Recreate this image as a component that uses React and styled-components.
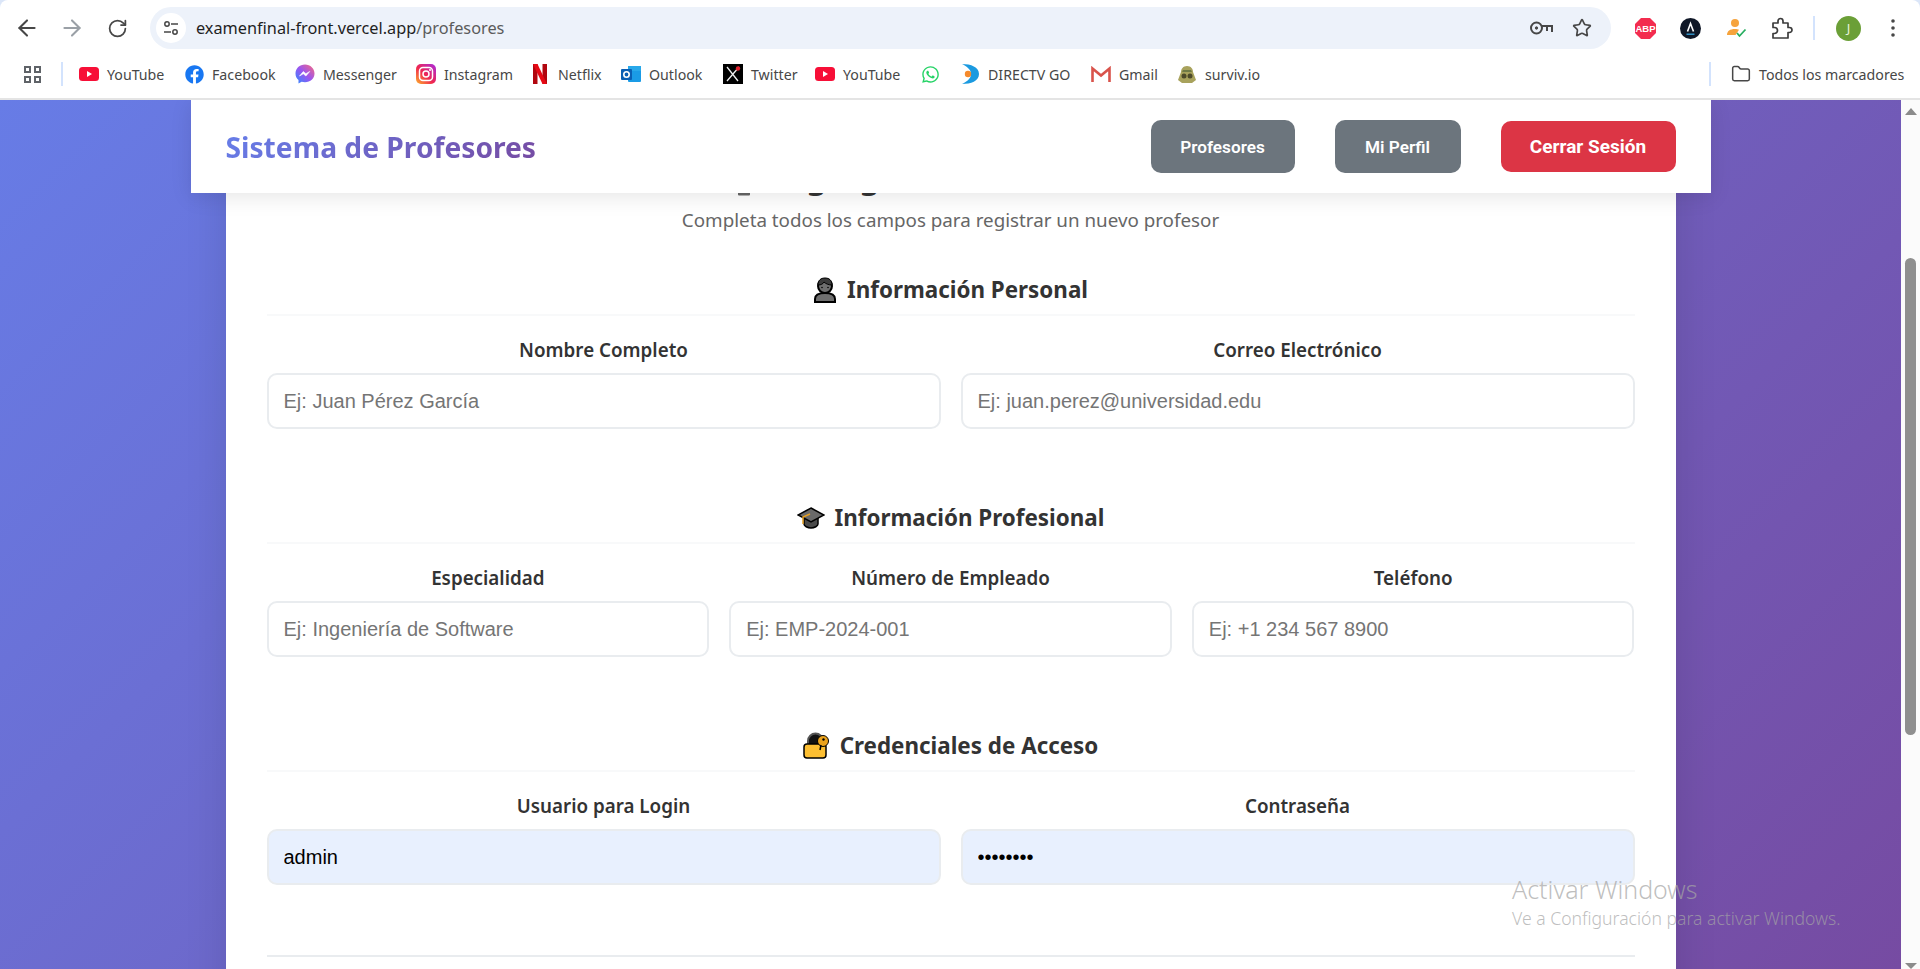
import React from "react";
import styled, { createGlobalStyle } from "styled-components";
import { ArrowLeft, ArrowRight, RotateCw, Star, Folder } from "lucide-react";
import { FaFacebook, FaWhatsapp } from "react-icons/fa";

const UI_FONT = `"Noto Sans", "Open Sans", "Liberation Sans", sans-serif`;
const FIELD_FONT = `"Liberation Sans", Arial, sans-serif`;

const GlobalStyle = createGlobalStyle`
  html, body {
    margin: 0;
    padding: 0;
    height: 100%;
    overflow: hidden;
    font-family: ${UI_FONT};
  }
  * { box-sizing: border-box; }
`;

const Page = styled.div`
  display: flex;
  flex-direction: column;
  height: 969px;
  overflow: hidden;
  background: #fff;
`;

/* ---- browser chrome ---- */

const BrowserChrome = styled.header`
  flex: 0 0 100px;
  display: flex;
  flex-direction: column;
  background: #dbe6f8;
`;

const Toolbar = styled.div`
  flex: 0 0 56px;
  display: flex;
  align-items: center;
  gap: 29px;
  padding: 0 0 0 19px;
  background: #fff;
  border-radius: 8px 8px 0 0;
`;

const NavIcon = styled.span`
  display: flex;
  width: 16px;
  height: 16px;
  align-items: center;
  justify-content: center;
  color: ${(p) => (p.$muted ? "#9aa0a6" : "#474747")};

  svg {
    flex-shrink: 0;
  }
`;

const AddressBar = styled.div`
  display: flex;
  align-items: center;
  width: 1461px;
  height: 42px;
  margin-left: -4px;
  padding: 0 19px 0 6px;
  border-radius: 21px;
  background: #edf2fa;
`;

const SiteInfo = styled.span`
  display: flex;
  align-items: center;
  justify-content: center;
  width: 30px;
  height: 30px;
  border-radius: 50%;
  background: #fff;
`;

const Url = styled.span`
  flex: 1;
  margin-left: 10px;
  font-size: 16.3px;
  color: #1f1f1f;
  white-space: nowrap;
`;

const UrlPath = styled.span`
  color: #5b5b5b;
`;

const AddressActions = styled.span`
  display: flex;
  align-items: center;
  gap: 19px;
  color: #474747;
`;

const Extensions = styled.div`
  display: flex;
  align-items: center;
  margin-left: -5px;
`;

const ExtensionSlot = styled.span`
  display: flex;
  align-items: center;
  justify-content: center;
  width: ${(p) => p.$w || 21}px;
  height: 24px;
  margin-right: ${(p) => p.$gap || 0}px;
`;

const ToolbarDivider = styled.span`
  width: 2px;
  height: 24px;
  margin-right: 21px;
  background: #d3e3fd;
`;

const Avatar = styled.span`
  display: flex;
  align-items: center;
  justify-content: center;
  width: 25px;
  height: 25px;
  margin-right: 30px;
  border-radius: 50%;
  background: #6b9f37;
  color: #e8f2dc;
  font-size: 13px;
`;

const BookmarksBar = styled.nav`
  flex: 0 0 44px;
  display: flex;
  align-items: center;
  gap: 20px;
  padding: 0 18px 6px 24px;
  background: #fff;
  border-bottom: 2px solid #e4e4e4;
`;

const AppsGrid = styled.span`
  display: grid;
  grid-template-columns: 7px 7px;
  gap: 3px;
`;

const AppsCell = styled.i`
  display: block;
  width: 7px;
  height: 7px;
  border: 2px solid #5f6368;
`;

const BarDivider = styled.span`
  width: 2px;
  height: 24px;
  margin-right: ${(p) => p.$pull || 0}px;
  background: #d3e3fd;
`;

const Bookmark = styled.span`
  display: flex;
  align-items: center;
  gap: 8px;
`;

const BookmarkIcon = styled.span`
  display: flex;
  align-items: center;
  justify-content: center;
  width: 20px;
  height: 20px;
`;

const BookmarkLabel = styled.span`
  width: ${(p) => p.$w}px;
  font-size: 14.2px;
  color: #474747;
  white-space: nowrap;
`;

const AllBookmarks = styled.span`
  display: flex;
  align-items: center;
  gap: 20px;
  margin-left: auto;
`;

/* ---- page content ---- */

const Viewport = styled.div`
  flex: 1;
  display: flex;
  min-height: 0;
`;

const Content = styled.main`
  position: relative;
  flex: 1;
  display: flex;
  flex-direction: column;
  align-items: center;
  overflow: hidden;
  background: linear-gradient(135deg, #677ce6 0%, #764ba2 100%);
`;

const Navbar = styled.div`
  position: relative;
  z-index: 2;
  flex: 0 0 93px;
  width: 1520px;
  display: flex;
  align-items: center;
  justify-content: space-between;
  padding: 0 35px;
  background: #fff;
  box-shadow: 0 4px 20px rgba(0, 0, 0, 0.1);
`;

const Brand = styled.span`
  padding-top: 1px;
  font-size: 28.2px;
  font-weight: 700;
  background: linear-gradient(135deg, #667eea, #764ba2);
  -webkit-background-clip: text;
  background-clip: text;
  color: transparent;
`;

const NavActions = styled.div`
  display: flex;
  align-items: center;
  gap: 40px;
`;

const NavButton = styled.button`
  width: ${(p) => p.$w}px;
  height: ${(p) => (p.$danger ? 51 : 53)}px;
  border: none;
  border-radius: 10px;
  background: ${(p) => (p.$danger ? "#dc3545" : "#6c757d")};
  color: #fff;
  font-family: Roboto, ${FIELD_FONT};
  font-size: ${(p) => (p.$danger ? 19 : 17.2)}px;
  font-weight: ${(p) => (p.$danger ? 700 : 600)};
  padding: 0 0 ${(p) => (p.$danger ? 1 : 0)}px;
`;

const Card = styled.section`
  flex: 0 0 auto;
  width: 1450px;
  margin-top: -93px;
  padding: 54px 41px 40px;
  background: #fff;
  box-shadow: 0 20px 40px rgba(0, 0, 0, 0.12);
`;

const Title = styled.h1`
  display: flex;
  align-items: center;
  justify-content: center;
  gap: 12px;
  margin: 0 0 11px;
  font-size: 32px;
  line-height: 43px;
  font-weight: 700;
  color: #333;
`;

const Subtitle = styled.p`
  margin: 0 0 43px;
  font-size: 18.8px;
  line-height: 24px;
  text-align: center;
  color: #666;
`;

const FormSection = styled.div`
  & + & {
    margin-top: 74px;
  }
`;

const SectionTitle = styled.h3`
  display: flex;
  align-items: center;
  justify-content: center;
  gap: 10px;
  height: 41px;
  margin: 0 0 22px;
  padding-bottom: 10px;
  border-bottom: 2px solid #f8f9fa;
  font-size: 22.4px;
  line-height: 30px;
  font-weight: 700;
  color: #333;
`;

const FieldRow = styled.div`
  display: grid;
  grid-template-columns: repeat(${(p) => p.$cols}, 1fr);
  gap: 20px;
`;

const Field = styled.div`
  display: flex;
  flex-direction: column;
  gap: 11px;
`;

const Label = styled.label`
  font-size: 18.8px;
  line-height: 24px;
  font-weight: 600;
  text-align: center;
  color: #333;
`;

const Input = styled.input`
  width: 100%;
  height: 56px;
  padding: 0 15px;
  border: 2px solid #e9ecef;
  border-radius: 10px;
  outline: none;
  background: ${(p) => (p.$filled ? "#e8f0fe" : "#fff")};
  color: #000;
  font-family: ${FIELD_FONT};
  font-size: 20px;

  &::placeholder {
    color: #757575;
    opacity: 1;
  }
`;

const FormFooter = styled.div`
  height: 60px;
  margin-top: 70px;
  border-top: 2px solid #e9ecef;
`;

const Watermark = styled.div`
  position: absolute;
  z-index: 3;
  left: 1512px;
  top: 772px;
  color: rgba(165, 165, 165, 0.72);
  white-space: nowrap;
`;

const WatermarkTitle = styled.div`
  font-size: 25px;
  font-weight: 300;
  line-height: 34px;
`;

const WatermarkText = styled.div`
  font-size: 17.6px;
  font-weight: 300;
  line-height: 24px;
`;

/* ---- fake scrollbar ---- */

const Scrollbar = styled.div`
  flex: 0 0 19px;
  display: flex;
  flex-direction: column;
  align-items: center;
  padding-top: 8px;
  background: #fbfbfb;
`;

const ScrollUp = styled.span`
  width: 0;
  height: 0;
  border-left: 6.5px solid transparent;
  border-right: 6.5px solid transparent;
  border-bottom: 7px solid #8b8b8b;
`;

const ScrollThumb = styled.span`
  width: 11px;
  height: 477px;
  margin-top: 143px;
  border-radius: 6px;
  background: #8f8f8f;
`;

const ScrollDown = styled.span`
  width: 0;
  height: 0;
  margin-top: auto;
  border-left: 6.5px solid transparent;
  border-right: 6.5px solid transparent;
  border-top: 6px solid #8b8b8b;
`;

/* ---- drawn icons ---- */

const TuneIcon = () => (
  <svg width="16" height="16" viewBox="0 0 16 16" fill="none" stroke="#474747" strokeWidth="1.5">
    <circle cx="4" cy="4" r="2.2" />
    <path d="M8 4h7M1 12h7" />
    <circle cx="12" cy="12" r="2.2" />
  </svg>
);

const KeyIcon = () => (
  <svg width="23" height="16" viewBox="0 0 23 16" fill="none" stroke="#474747" strokeWidth="2">
    <circle cx="6.500" cy="8" r="5.500" />
    <circle cx="6.500" cy="8" r="1.200" fill="#474747" strokeWidth="1" />
    <path d="M12 6h10v6M17 6v5" />
  </svg>
);

const AbpIcon = () => (
  <svg width="21" height="21" viewBox="0 0 21 21">
    <polygon points="6,0 15,0 21,6 21,15 15,21 6,21 0,15 0,6" fill="#f32c4f" />
    <text x="10.5" y="14" textAnchor="middle" fontFamily="Liberation Sans" fontWeight="700" fontSize="9.5" fill="#fff">
      ABP
    </text>
  </svg>
);

const LambdaIcon = () => (
  <svg width="21" height="21" viewBox="0 0 21 21" fill="none">
    <circle cx="10.5" cy="10.5" r="10.5" fill="#101828" />
    <path d="M7.5 13.5l3-8 3 8" stroke="#fff" strokeWidth="1.6" />
    <path d="M6.5 16.2h8" stroke="#38a3dc" strokeWidth="1.3" />
  </svg>
);

const PersonCheckIcon = () => (
  <svg width="20" height="20" viewBox="0 0 20 20" fill="none">
    <circle cx="8" cy="5" r="4" fill="#f6a33c" />
    <path d="M0 17c0-4 3-6 8-6 1.500 0 3 .3 4 .8L8.500 17z" fill="#f6a33c" />
    <path d="M10 15l2.500 3 6-6.500" stroke="#27ae60" strokeWidth="1.800" />
  </svg>
);

const PuzzleIcon = () => (
  <svg width="21" height="22" viewBox="0 0 21 22" fill="none" stroke="#3c3c3c" strokeWidth="1.700" strokeLinejoin="round">
    <path d="M1 6h5V4a2.500 2.500 0 0 1 5 0v2h5v4.500h1.500a2.500 2.500 0 0 1 0 5H16V21H1v-4.500h1.500a3 3 0 0 0 0-6H1z" />
  </svg>
);

const DotsIcon = () => (
  <svg width="4" height="18" viewBox="0 0 4 18" fill="#474747">
    <circle cx="2" cy="2" r="1.800" />
    <circle cx="2" cy="9" r="1.800" />
    <circle cx="2" cy="16" r="1.800" />
  </svg>
);

const YoutubeIcon = () => (
  <svg width="20" height="14" viewBox="0 0 20 14">
    <rect width="20" height="14" rx="3.500" fill="#f70f37" />
    <polygon points="8,4 13,7 8,10" fill="#fff" />
  </svg>
);

const MessengerIcon = () => (
  <svg width="20" height="20" viewBox="0 0 20 20">
    <defs>
      <linearGradient id="msg" x1="0" y1="1" x2="1" y2="0">
        <stop offset="0" stopColor="#2b8cff" />
        <stop offset="0.5" stopColor="#9a55f0" />
        <stop offset="1" stopColor="#fb6a7c" />
      </linearGradient>
    </defs>
    <path d="M10 .5C4.600.5.500 4.400.500 9.500c0 2.700 1.100 5 3 6.600V19.500l3.100-1.700c1 .3 2.200.5 3.400.5 5.400 0 9.500-3.900 9.500-8.800S15.400.5 10 .5z" fill="url(#msg)" />
    <path d="M4.500 12l3.800-4.500 2.600 2.200 3.800-2.200-3.800 4.500-2.600-2.200z" fill="#fff" stroke="#fff" strokeWidth=".6" />
  </svg>
);

const InstagramIcon = () => (
  <svg width="20" height="20" viewBox="0 0 20 20" fill="none">
    <defs>
      <linearGradient id="ig" x1="0" y1="1" x2="1" y2="0">
        <stop offset="0" stopColor="#fdb32b" />
        <stop offset="0.45" stopColor="#f0264f" />
        <stop offset="1" stopColor="#a82be0" />
      </linearGradient>
    </defs>
    <rect width="20" height="20" rx="5" fill="url(#ig)" />
    <rect x="3.500" y="3.500" width="13" height="13" rx="3.500" stroke="#fff" strokeWidth="1.500" />
    <circle cx="10" cy="10" r="3" stroke="#fff" strokeWidth="1.500" />
    <circle cx="14" cy="6" r="1" fill="#fff" />
  </svg>
);

const NetflixIcon = () => (
  <svg width="14" height="20" viewBox="0 0 14 20">
    <polygon points="0,0 4.500,0 4.500,20 0,20" fill="#b1060f" />
    <polygon points="9.500,0 14,0 14,20 9.500,20" fill="#b1060f" />
    <polygon points="0,0 4.500,0 14,20 9.500,20" fill="#e50914" />
  </svg>
);

const OutlookIcon = () => (
  <svg width="20" height="20" viewBox="0 0 20 20" fill="none">
    <rect x="7" y="2" width="13" height="16" rx="1" fill="#1a9be6" />
    <rect x="7" y="2" width="13" height="5" fill="#28a8ea" />
    <rect x="0" y="5" width="11" height="11" rx="1" fill="#0a5fb4" />
    <circle cx="5.500" cy="10.500" r="2.700" stroke="#fff" strokeWidth="1.600" />
  </svg>
);

const XIcon = () => (
  <svg width="20" height="20" viewBox="0 0 20 20" fill="none">
    <rect width="20" height="20" fill="#000" />
    <path d="M4 3l11 14M16 3L4 17" stroke="#eee" strokeWidth="1.300" />
    <circle cx="15" cy="4.500" r="2.200" fill="#e0202c" />
  </svg>
);

const DirectvIcon = () => (
  <svg width="18" height="20" viewBox="0 0 18 20" fill="none">
    <path d="M1 0c9 0 17 3 17 10S10 20 1 20c4-2 9-5 9-10S5 2 1 0z" fill="#1b9ae0" />
    <circle cx="7" cy="10" r="3.200" fill="#f58a2c" />
  </svg>
);

const GmailIcon = () => (
  <svg width="20" height="17" viewBox="0 0 20 17" fill="none">
    <path d="M1.500 16V2.500L10 9.500l8.500-7V16" stroke="#d9534b" strokeWidth="2.600" />
  </svg>
);

const SurvivIcon = () => (
  <svg width="18" height="19" viewBox="0 0 18 19">
    <path d="M9 1c4 0 6 3 6 6l3 8-4 3H4l-4-3 3-8c0-3 2-6 6-6z" fill="#a8a25c" />
    <circle cx="6" cy="11" r="2.500" fill="#4d4a2a" />
    <circle cx="12" cy="11" r="2.500" fill="#4d4a2a" />
    <path d="M5 5h8l1 2H4z" fill="#6f7a45" />
  </svg>
);

const FormEmoji = () => (
  <svg width="40" height="40" viewBox="0 0 40 40">
    <rect x="6" y="2" width="12" height="37.500" rx="1" fill="#666" />
  </svg>
);

const PersonEmoji = () => (
  <svg width="24" height="26" viewBox="0 0 24 26" stroke="#000" strokeWidth="2" fill="#6f6f6f">
    <path d="M2 25v-3c0-4 4-6 10-6s10 2 10 6v3z" />
    <circle cx="12" cy="9" r="7" />
    <path d="M5 8c0-5 3-7 7-7s7 2 7 7c-3 0-6-1-8-3-1 2-3 3-6 3z" fill="#3b3b3b" strokeWidth="1" />
    <circle cx="9" cy="10.500" r=".8" stroke="none" fill="#000" />
    <circle cx="15" cy="10.500" r=".8" stroke="none" fill="#000" />
  </svg>
);

const CapEmoji = () => (
  <svg width="28" height="22" viewBox="0 0 28 22">
    <path d="M7 10v7c0 2 3.500 4 7 4s7-2 7-4v-7z" fill="#4a4a4a" stroke="#000" strokeWidth="1.500" />
    <polygon points="14,1 27,8 14,15 1,8" fill="#6a6a6a" stroke="#000" strokeWidth="1.500" />
    <path d="M13 7L6 10v7" fill="none" stroke="#e6a021" strokeWidth="1.500" />
  </svg>
);

const LockEmoji = () => (
  <svg width="27" height="27" viewBox="0 0 27 27">
    <path d="M5 12V9a7.500 7.500 0 0 1 15 0v3" fill="#111" stroke="#555" strokeWidth="2" />
    <rect x="1" y="12" width="22" height="14" rx="3" fill="#fdbf32" stroke="#000" strokeWidth="1.500" />
    <circle cx="20" cy="9" r="5.500" fill="#eba21b" stroke="#000" strokeWidth="1" />
    <circle cx="20.500" cy="7.500" r="1.200" fill="#000" />
    <path d="M18 13l-1 5" stroke="#000" strokeWidth="1.500" />
  </svg>
);

const bookmarks = [
  { label: "YouTube", width: 57, icon: <YoutubeIcon /> },
  { label: "Facebook", width: 63, icon: <FaFacebook size={19} color="#1877f2" /> },
  { label: "Messenger", width: 73, icon: <MessengerIcon /> },
  { label: "Instagram", width: 66, icon: <InstagramIcon /> },
  { label: "Netflix", width: 43, icon: <NetflixIcon /> },
  { label: "Outlook", width: 54, icon: <OutlookIcon /> },
  { label: "Twitter", width: 44, icon: <XIcon /> },
  { label: "YouTube", width: 57, icon: <YoutubeIcon /> },
  { label: "", width: 0, icon: <FaWhatsapp size={19} color="#25d366" /> },
  { label: "DIRECTV GO", width: 83, icon: <DirectvIcon /> },
  { label: "Gmail", width: 38, icon: <GmailIcon /> },
  { label: "surviv.io", width: 53, icon: <SurvivIcon /> },
];

const sections = [
  {
    title: "Información Personal",
    icon: <PersonEmoji />,
    fields: [
      { label: "Nombre Completo", placeholder: "Ej: Juan Pérez García" },
      { label: "Correo Electrónico", placeholder: "Ej: juan.perez@universidad.edu" },
    ],
  },
  {
    title: "Información Profesional",
    icon: <CapEmoji />,
    fields: [
      { label: "Especialidad", placeholder: "Ej: Ingeniería de Software" },
      { label: "Número de Empleado", placeholder: "Ej: EMP-2024-001" },
      { label: "Teléfono", placeholder: "Ej: +1 234 567 8900" },
    ],
  },
  {
    title: "Credenciales de Acceso",
    icon: <LockEmoji />,
    fields: [
      { label: "Usuario para Login", value: "admin" },
      { label: "Contraseña", value: "12345678", type: "password" },
    ],
  },
];

export default function App() {
  return (
    <Page>
      <GlobalStyle />
      <BrowserChrome>
        <Toolbar>
          <NavIcon><ArrowLeft size={26} strokeWidth={1.9} /></NavIcon>
          <NavIcon $muted><ArrowRight size={26} strokeWidth={1.9} /></NavIcon>
          <NavIcon><RotateCw size={21} strokeWidth={2} /></NavIcon>
          <AddressBar>
            <SiteInfo><TuneIcon /></SiteInfo>
            <Url>
              examenfinal-front.vercel.app<UrlPath>/profesores</UrlPath>
            </Url>
            <AddressActions>
              <KeyIcon />
              <Star size={20} strokeWidth={2} />
            </AddressActions>
          </AddressBar>
          <Extensions>
            <ExtensionSlot $gap={24}><AbpIcon /></ExtensionSlot>
            <ExtensionSlot $gap={25}><LambdaIcon /></ExtensionSlot>
            <ExtensionSlot $gap={25}><PersonCheckIcon /></ExtensionSlot>
            <ExtensionSlot $gap={20}><PuzzleIcon /></ExtensionSlot>
            <ToolbarDivider />
            <Avatar>J</Avatar>
            <DotsIcon />
          </Extensions>
        </Toolbar>
        <BookmarksBar>
          <AppsGrid>
            <AppsCell /><AppsCell /><AppsCell /><AppsCell />
          </AppsGrid>
          <BarDivider $pull={-4} />
          {bookmarks.map((b, i) => (
            <Bookmark key={i}>
              <BookmarkIcon>{b.icon}</BookmarkIcon>
              {b.label && <BookmarkLabel $w={b.width}>{b.label}</BookmarkLabel>}
            </Bookmark>
          ))}
          <AllBookmarks>
            <BarDivider />
            <Bookmark>
              <BookmarkIcon><Folder size={20} color="#474747" strokeWidth={1.8} /></BookmarkIcon>
              <BookmarkLabel $w={143}>Todos los marcadores</BookmarkLabel>
            </Bookmark>
          </AllBookmarks>
        </BookmarksBar>
      </BrowserChrome>

      <Viewport>
        <Content>
          <Navbar>
            <Brand>Sistema de Profesores</Brand>
            <NavActions>
              <NavButton $w={144}>Profesores</NavButton>
              <NavButton $w={126}>Mi Perfil</NavButton>
              <NavButton $w={175} $danger>Cerrar Sesión</NavButton>
            </NavActions>
          </Navbar>
          <Card>
            <Title><FormEmoji />Agregar Nuevo Profesor</Title>
            <Subtitle>Completa todos los campos para registrar un nuevo profesor</Subtitle>
            {sections.map((s) => (
              <FormSection key={s.title}>
                <SectionTitle>
                  {s.icon}
                  {s.title}
                </SectionTitle>
                <FieldRow $cols={s.fields.length}>
                  {s.fields.map((f) => (
                    <Field key={f.label}>
                      <Label>{f.label}</Label>
                      <Input
                        type={f.type || "text"}
                        placeholder={f.placeholder}
                        defaultValue={f.value}
                        $filled={Boolean(f.value)}
                      />
                    </Field>
                  ))}
                </FieldRow>
              </FormSection>
            ))}
            <FormFooter />
          </Card>
          <Watermark>
            <WatermarkTitle>Activar Windows</WatermarkTitle>
            <WatermarkText>Ve a Configuración para activar Windows.</WatermarkText>
          </Watermark>
        </Content>
        <Scrollbar>
          <ScrollUp />
          <ScrollThumb />
          <ScrollDown />
        </Scrollbar>
      </Viewport>
    </Page>
  );
}
